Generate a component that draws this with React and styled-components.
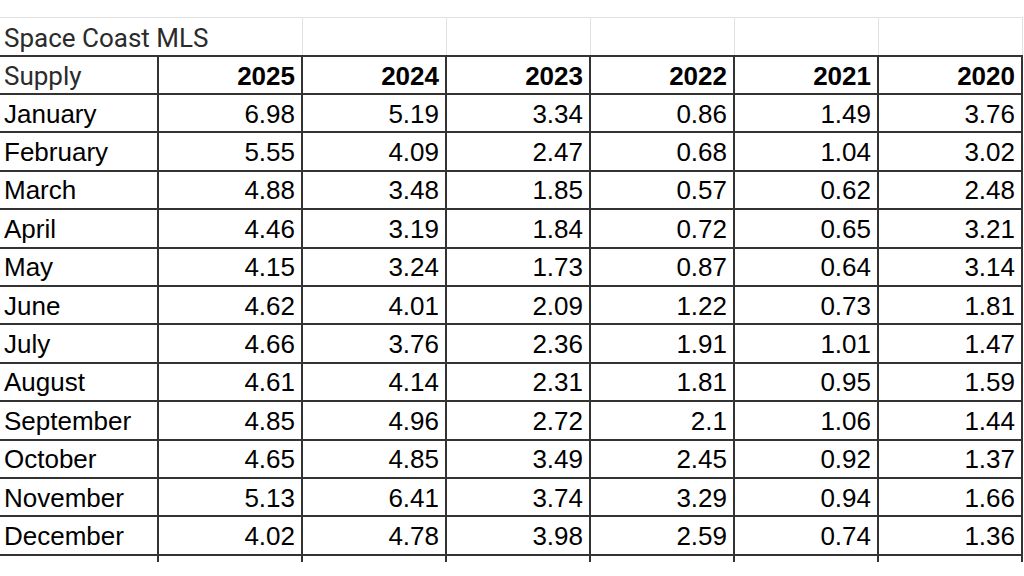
import React from "react";
import styled, { createGlobalStyle } from "styled-components";

const GlobalStyle = createGlobalStyle`
  html, body {
    margin: 0;
    padding: 0;
    background: #fff;
  }
`;

const years = ["2025", "2024", "2023", "2022", "2021", "2020"];

const rows = [
  ["January", "6.98", "5.19", "3.34", "0.86", "1.49", "3.76"],
  ["February", "5.55", "4.09", "2.47", "0.68", "1.04", "3.02"],
  ["March", "4.88", "3.48", "1.85", "0.57", "0.62", "2.48"],
  ["April", "4.46", "3.19", "1.84", "0.72", "0.65", "3.21"],
  ["May", "4.15", "3.24", "1.73", "0.87", "0.64", "3.14"],
  ["June", "4.62", "4.01", "2.09", "1.22", "0.73", "1.81"],
  ["July", "4.66", "3.76", "2.36", "1.91", "1.01", "1.47"],
  ["August", "4.61", "4.14", "2.31", "1.81", "0.95", "1.59"],
  ["September", "4.85", "4.96", "2.72", "2.1", "1.06", "1.44"],
  ["October", "4.65", "4.85", "3.49", "2.45", "0.92", "1.37"],
  ["November", "5.13", "6.41", "3.74", "3.29", "0.94", "1.66"],
  ["December", "4.02", "4.78", "3.98", "2.59", "0.74", "1.36"],
];

const Sheet = styled.div`
  margin-top: 17px;
  display: grid;
  grid-template-columns: 159px repeat(6, 144px);
  grid-template-rows: 38px 40px repeat(12, 38.4px) 6px;
  font-family: "Liberation Sans", Arial, sans-serif;
  font-size: 26px;
  color: #000;
`;

const Cell = styled.div`
  box-sizing: border-box;
  display: flex;
  align-items: center;
  justify-content: ${(p) => (p.$num ? "flex-end" : "flex-start")};
  padding: 2px 6px 0 4px;
  white-space: nowrap;
  overflow: visible;
  border-right: 2px solid #333;
  border-bottom: 2px solid #333;
  font-weight: ${(p) => (p.$bold ? 700 : 400)};
`;

const TopCell = styled(Cell)`
  border-top: 1px solid #e2e2e2;
  border-right: 1px solid #e2e2e2;
  border-bottom: none;
  grid-column: ${(p) => (p.$span ? `span ${p.$span}` : "auto")};
  justify-content: flex-start;
  padding-top: 2px;
  font-family: Roboto, "Noto Sans", sans-serif;
  color: #2b2b2b;
  padding-right: 0;
`;

const HeadCell = styled(Cell)`
  border-top: 2px solid #333;
`;

const SupplyCell = styled(HeadCell)`
  font-family: Roboto, "Noto Sans", sans-serif;
  color: #2b2b2b;
`;

const TailCell = styled.div`
  border-right: 2px solid #333;
`;

export default function App() {
  return (
    <>
      <GlobalStyle />
      <Sheet>
        <TopCell $span={2}>Space Coast MLS</TopCell>
        {years.slice(1).map((y) => (
          <TopCell key={"t" + y} />
        ))}

        <SupplyCell>Supply</SupplyCell>
        {years.map((y) => (
          <HeadCell key={y} $num $bold>
            {y}
          </HeadCell>
        ))}

        {rows.map((r) =>
          r.map((v, i) => (
            <Cell key={r[0] + i} $num={i > 0}>
              {v}
            </Cell>
          ))
        )}

        {Array.from({ length: 7 }).map((_, i) => (
          <TailCell key={"tail" + i} />
        ))}
      </Sheet>
    </>
  );
}
